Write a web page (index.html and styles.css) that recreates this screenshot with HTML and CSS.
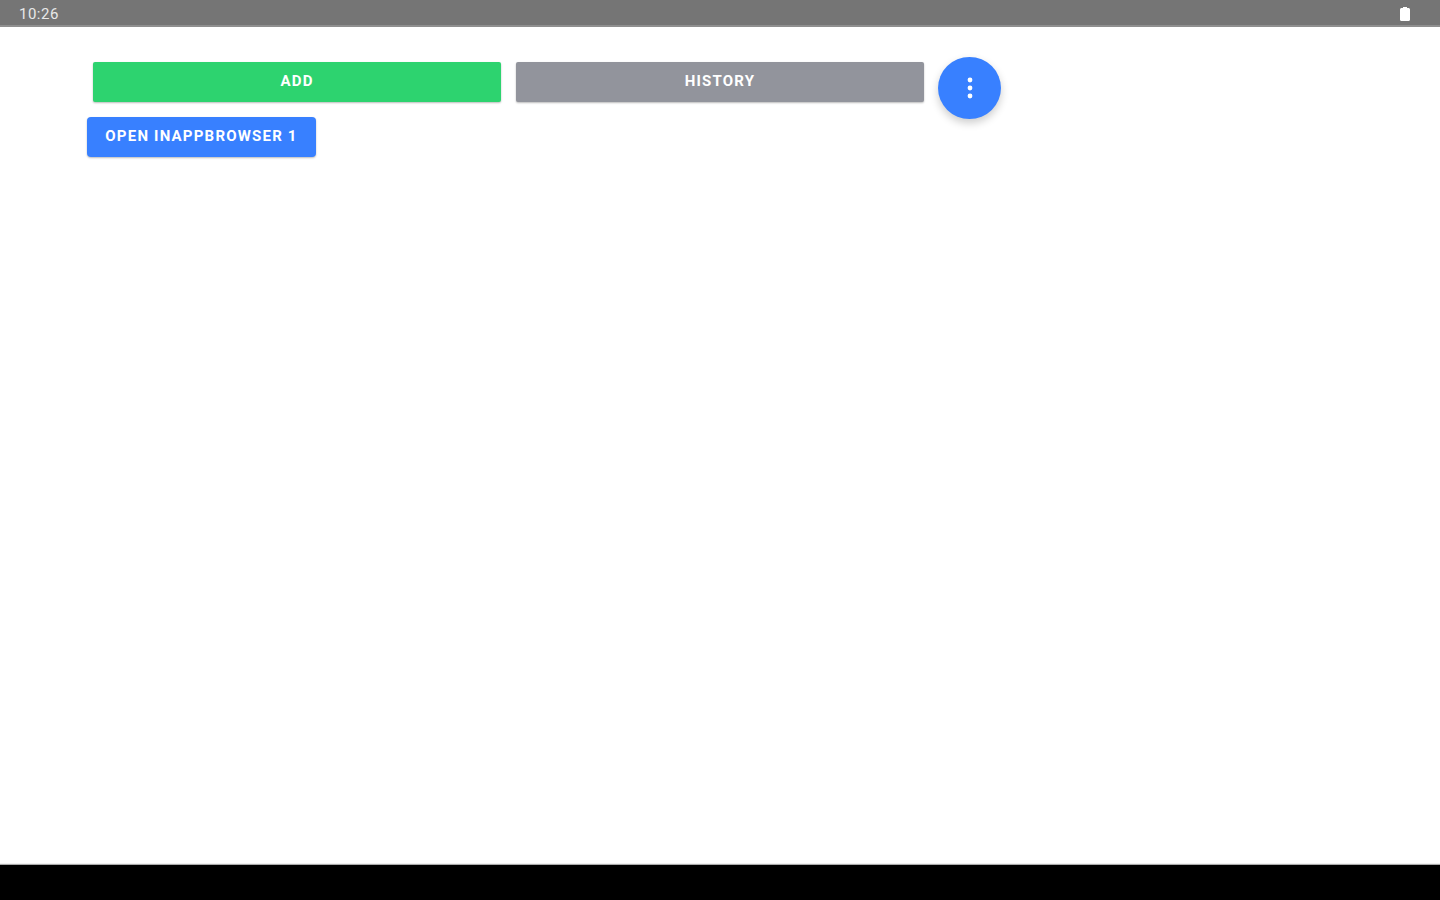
FILE: index.html
```html
<!DOCTYPE html>
<html lang="en">
<head>
  <meta charset="UTF-8">
  <title>InAppBrowser demo</title>
  <meta name="viewport" content="width=device-width,initial-scale=1">
  <link rel="stylesheet" href="styles.css">
</head>
<body>
  <div class="status-bar">
    <span class="clock">10:26</span>
    <svg class="battery" width="12" height="16" viewBox="0 0 12 16">
      <path d="M4 1h4v1h1.4c.9 0 1.6.7 1.6 1.6v10.2c0 .7-.5 1.2-1.2 1.2H2.2c-.7 0-1.2-.5-1.2-1.2V3.6C1 2.7 1.7 2 2.6 2H4z" fill="#fff"/>
    </svg>
  </div>

  <main class="content">
    <div class="row">
      <button class="button wide green">Add</button>
      <button class="button wide gray">History</button>
      <button class="fab" aria-label="More">
        <svg width="6" height="24" viewBox="0 0 6 24">
          <circle cx="3" cy="4" r="2.4" fill="#fff"/>
          <circle cx="3" cy="12" r="2.4" fill="#fff"/>
          <circle cx="3" cy="20" r="2.4" fill="#fff"/>
        </svg>
      </button>
    </div>
    <button class="button blue">Open InAppBrowser 1</button>
  </main>

  <div class="nav-bar"></div>
</body>
</html>
```

FILE: styles.css
```css
html, body { height: 100%; }
body { margin: 0; display: flex; flex-direction: column; background: #fff; font-family: Roboto, "Liberation Sans", sans-serif; overflow: hidden; }

.status-bar { height: 27px; flex: none; display: flex; align-items: center; justify-content: space-between; padding: 2px 29px 0 19px; box-sizing: border-box; background: #757575; color: #fff; border-bottom: 2px solid #8f8f8f; }
.clock { font-size: 15px; color: #e8e8e8; letter-spacing: 0.5px; }
.battery { display: block; }

.content { flex: 1; padding: 30px 0 0 87px; }
.row { display: flex; align-items: flex-start; height: 60px; padding-left: 6px; }

.button { height: 40px; border: none; border-radius: 2px; color: #fff; font-family: inherit; font-size: 15px; font-weight: 700; letter-spacing: 1.2px; text-transform: uppercase; padding: 0 0 3px; box-shadow: 0 1px 2px #0004; }
.wide { width: 408px; margin-top: 5px; margin-right: 15px; }
.green { background: #2dd36f; }
.gray { background: #92949c; margin-right: 14px; }
.blue { display: block; width: 229px; background: #3880ff; border-radius: 4px; }

.fab { width: 63px; height: 62px; flex: none; border: none; border-radius: 50%; background: #3880ff; padding: 0; display: flex; align-items: center; justify-content: center; box-shadow: 0 4px 8px #0003; }

.nav-bar { height: 35px; flex: none; background: #000; box-shadow: 0 -1px 1px #0005; }
```
